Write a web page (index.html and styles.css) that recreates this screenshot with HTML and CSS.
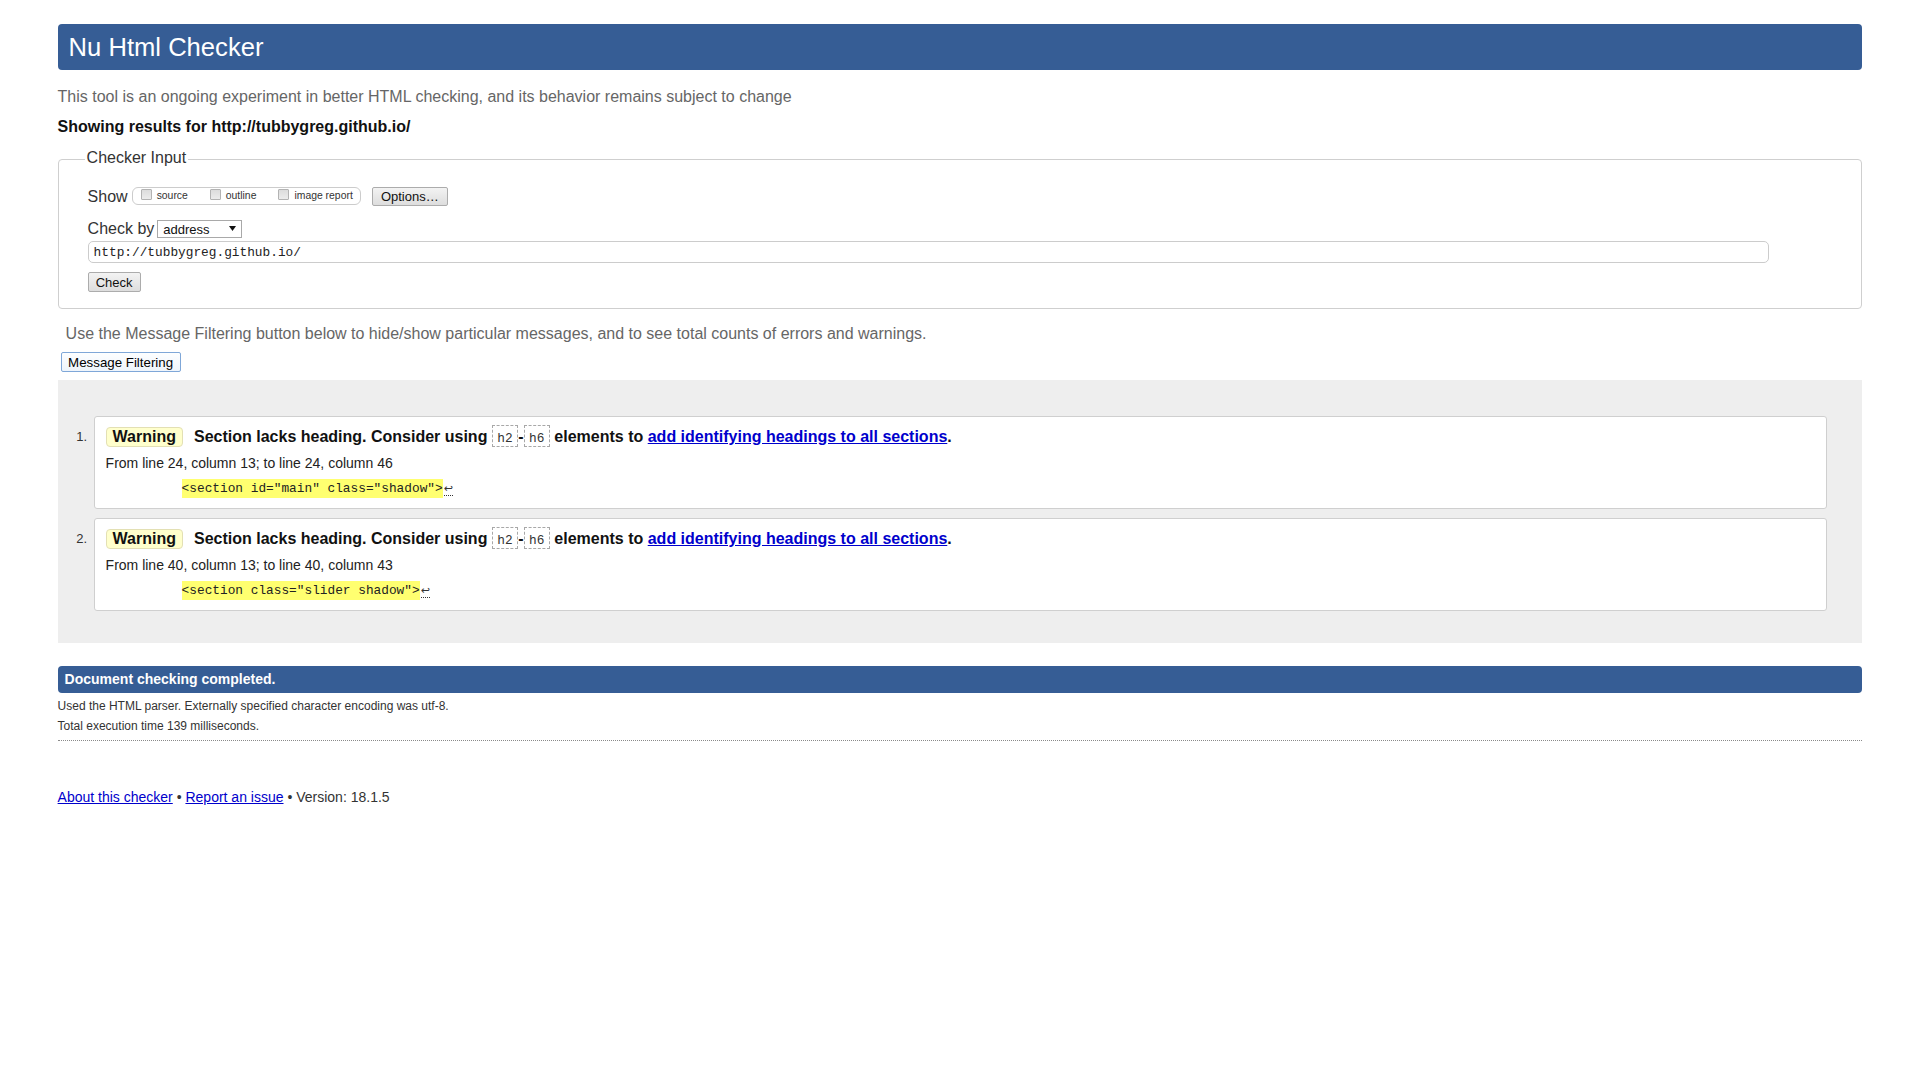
FILE: index.html
```html
<!DOCTYPE html>
<html lang="en">
<head>
<meta charset="utf-8">
<title>Showing results for http://tubbygreg.github.io/ - Nu Html Checker</title>
<link rel="stylesheet" href="styles.css">
</head>
<body>
<div class="page">
  <h1 class="title">Nu Html Checker</h1>
  <p class="intro">This tool is an ongoing experiment in better HTML checking, and its behavior remains subject to change</p>
  <p class="showing">Showing results for http://tubbygreg.github.io/</p>

  <fieldset class="checker">
    <legend class="legend">Checker Input</legend>
    <div class="row row-show">
      <span class="lbl">Show</span>
      <span class="opts">
        <label class="opt"><input class="cb" type="checkbox">source</label>
        <label class="opt"><input class="cb" type="checkbox">outline</label>
        <label class="opt"><input class="cb" type="checkbox">image report</label>
      </span>
      <button class="btn btn-options" type="button">Options…</button>
    </div>
    <div class="row row-by">
      <span class="lbl">Check by</span>
      <span class="select-wrap">
        <select class="select"><option>address</option></select>
        <svg class="select-arrow" width="7" height="5" viewBox="0 0 7 5"><path d="M0 0H7L3.5 5Z" fill="#111"/></svg>
      </span>
    </div>
    <input class="url" type="text" value="http://tubbygreg.github.io/">
    <button class="btn btn-check" type="button">Check</button>
  </fieldset>

  <p class="filter-note">Use the Message Filtering button below to hide/show particular messages, and to see total counts of errors and warnings.</p>
  <button class="btn-filter" type="button">Message Filtering</button>

  <div class="results">
    <div class="msg-row">
      <span class="num">1.</span>
      <div class="msg">
        <p class="msg-line"><span class="badge">Warning</span><span class="msg-text">Section lacks heading. Consider using <code class="tag">h2</code>-<code class="tag">h6</code> elements to <a class="link" href="#">add identifying headings to all sections</a>.</span></p>
        <p class="loc">From line 24, column 13; to line 24, column 46</p>
        <p class="extract"><b class="hl">&lt;section id="main" class="shadow"&gt;</b><span class="lf">↩</span></p>
      </div>
    </div>
    <div class="msg-row">
      <span class="num">2.</span>
      <div class="msg">
        <p class="msg-line"><span class="badge">Warning</span><span class="msg-text">Section lacks heading. Consider using <code class="tag">h2</code>-<code class="tag">h6</code> elements to <a class="link" href="#">add identifying headings to all sections</a>.</span></p>
        <p class="loc">From line 40, column 13; to line 40, column 43</p>
        <p class="extract"><b class="hl">&lt;section class="slider shadow"&gt;</b><span class="lf">↩</span></p>
      </div>
    </div>
  </div>

  <div class="status">
    <p class="done">Document checking completed.</p>
    <p class="meta meta-first">Used the HTML parser. Externally specified character encoding was utf-8.</p>
    <p class="meta">Total execution time 139 milliseconds.</p>
  </div>

  <p class="footer"><a class="flink" href="#">About this checker</a> • <a class="flink" href="#">Report an issue</a> • Version: 18.1.5</p>
</div>
</body>
</html>
```

FILE: styles.css
```css
* { box-sizing: border-box; }

body {
  margin: 0;
  background: #fff;
  font-family: "Liberation Sans", Arial, Helvetica, sans-serif;
  color: #222;
}

.page { padding: 0 3% 40px; }

.title {
  margin: 24px 0 0;
  height: 46px;
  line-height: 46px;
  padding-left: 11px;
  font-size: 25.6px;
  font-weight: normal;
  color: #fff;
  background: #365d95;
  border-radius: 4px;
}

.intro {
  margin: 17px 0 0;
  font-size: 16px;
  line-height: 20px;
  color: #666;
}

.showing {
  margin: 10px 0 0;
  font-size: 16px;
  line-height: 20px;
  font-weight: bold;
  color: #111;
}

.checker {
  margin: 12px 0 0;
  padding: 18px 0 16px 29px;
  border: 1px solid #cfcfcf;
  border-radius: 4px;
  min-width: 0;
}

.legend {
  padding: 0 2px 2px;
  margin-left: -3px;
  font-size: 16px;
  line-height: 18px;
  color: #333;
}

.row { display: flex; align-items: center; }
.row-show { height: 19px; align-items: flex-start; }
.row-by { height: 20px; margin-top: 13px; }

.lbl {
  font-size: 16px;
  line-height: 19px;
  color: #333;
}
.row-by .lbl { line-height: 20px; }

.opts {
  display: inline-flex;
  align-items: flex-start;
  height: 18px;
  margin-left: 4px;
  padding: 0 7px 0 8px;
  border: 1px solid #ccc;
  border-radius: 6px;
}

.opt {
  display: flex;
  align-items: flex-start;
  font-size: 10.4px;
  line-height: 16px;
  color: #333;
}
.opt + .opt { margin-left: 22px; }

.cb {
  appearance: none;
  -webkit-appearance: none;
  width: 11px;
  height: 11px;
  margin: 1px 5px 0 0;
  border: 1px solid #b3b3b3;
  background: linear-gradient(#dcdcdc, #ececec);
  border-radius: 1px;
}

.btn {
  font-family: inherit;
  font-size: 13px;
  color: #111;
  background: linear-gradient(#f3f3f3, #dddddd);
  border: 1px solid #acacac;
  border-radius: 2px;
  padding: 0;
}

.btn-options {
  width: 76px;
  height: 19px;
  margin-left: 11px;
}

.select-wrap {
  position: relative;
  display: inline-block;
  margin-left: 3px;
  height: 18px;
}

.select {
  appearance: none;
  -webkit-appearance: none;
  display: block;
  width: 85px;
  height: 18px;
  padding: 0 0 0 5px;
  font-family: inherit;
  font-size: 13px;
  color: #111;
  background: #fff;
  border: 1px solid #a9a9a9;
  border-radius: 0;
}

.select-arrow {
  position: absolute;
  right: 6px;
  top: 6px;
}

.url {
  display: block;
  width: 1681px;
  height: 22px;
  margin-top: 2px;
  padding: 0 0 0 5px;
  font-family: "Liberation Mono", "DejaVu Sans Mono", monospace;
  font-size: 12.8px;
  color: #222;
  border: 1px solid #cccccc;
  border-radius: 5px;
  background: #fff;
}

.btn-check {
  display: block;
  width: 53px;
  height: 20px;
  margin-top: 9px;
}

.filter-note {
  margin: 15px 0 0;
  padding-left: 8px;
  font-size: 16px;
  line-height: 20px;
  color: #666;
}

.btn-filter {
  display: block;
  width: 120px;
  height: 20px;
  margin: 8px 0 0 3px;
  padding: 0;
  font-family: inherit;
  font-size: 13.3px;
  color: #000;
  background: linear-gradient(#fdfeff, #eef4fb);
  border: 1px solid #7fa7d8;
  border-radius: 2px;
}

.results {
  margin-top: 8px;
  padding: 36px 35px 32px 0;
  background: #eeeeee;
  display: flex;
  flex-direction: column;
  gap: 9px;
}

.msg-row { display: flex; }

.num {
  flex: 0 0 36px;
  margin-top: 11px;
  padding-right: 6.5px;
  text-align: right;
  font-size: 13px;
  line-height: 20px;
  color: #333;
}

.msg {
  flex: 1;
  padding: 10px 11px 10px;
  background: #fff;
  border: 1px solid #cfcfcf;
  border-radius: 3px;
}

.msg-line {
  margin: 0;
  height: 20px;
  font-size: 16px;
  line-height: 20px;
  font-weight: bold;
  color: #111;
  white-space: nowrap;
}

.badge {
  display: inline-block;
  height: 20px;
  line-height: 18px;
  padding: 0 6px;
  margin-right: 11px;
  background: #ffffcc;
  border: 1px solid #e3e0b4;
  border-radius: 4px;
  vertical-align: top;
}

.tag {
  font-family: "Liberation Mono", "DejaVu Sans Mono", monospace;
  font-size: 12.8px;
  font-weight: normal;
  line-height: 1;
  color: #333;
  padding: 5px 4.5px 0;
  border: 1px dashed #a8a8a8;
}

.link { color: #0000cc; text-decoration: underline; }

.loc {
  margin: 8px 0 0;
  font-size: 14px;
  line-height: 16px;
  color: #222;
}

.extract {
  margin: 9px 0 0;
  padding-left: 76px;
  font-family: "Liberation Mono", "DejaVu Sans Mono", monospace;
  font-size: 12.8px;
  line-height: 18px;
  color: #222;
}

.hl {
  font-weight: normal;
  background: #ffff70;
  padding: 2px 0;
}

.lf {
  font-family: "DejaVu Sans", sans-serif;
  font-size: 11px;
  line-height: 1;
  color: #333;
  border-bottom: 1px dotted #333;
  margin-left: 1px;
}

.status {
  margin-top: 23px;
  padding-bottom: 4px;
  border-bottom: 1px dotted #8a8a8a;
}

.done {
  margin: 0;
  height: 27px;
  line-height: 27px;
  padding-left: 7px;
  font-size: 14px;
  font-weight: bold;
  color: #fff;
  background: #365d95;
  border-radius: 4px;
}

.meta {
  margin: 0;
  font-size: 12px;
  line-height: 20px;
  color: #333;
}
.meta-first { margin-top: 3px; }

.footer {
  margin: 47px 0 0;
  font-size: 14px;
  line-height: 18px;
  color: #333;
}

.flink { color: #0000cc; text-decoration: underline; }
```
